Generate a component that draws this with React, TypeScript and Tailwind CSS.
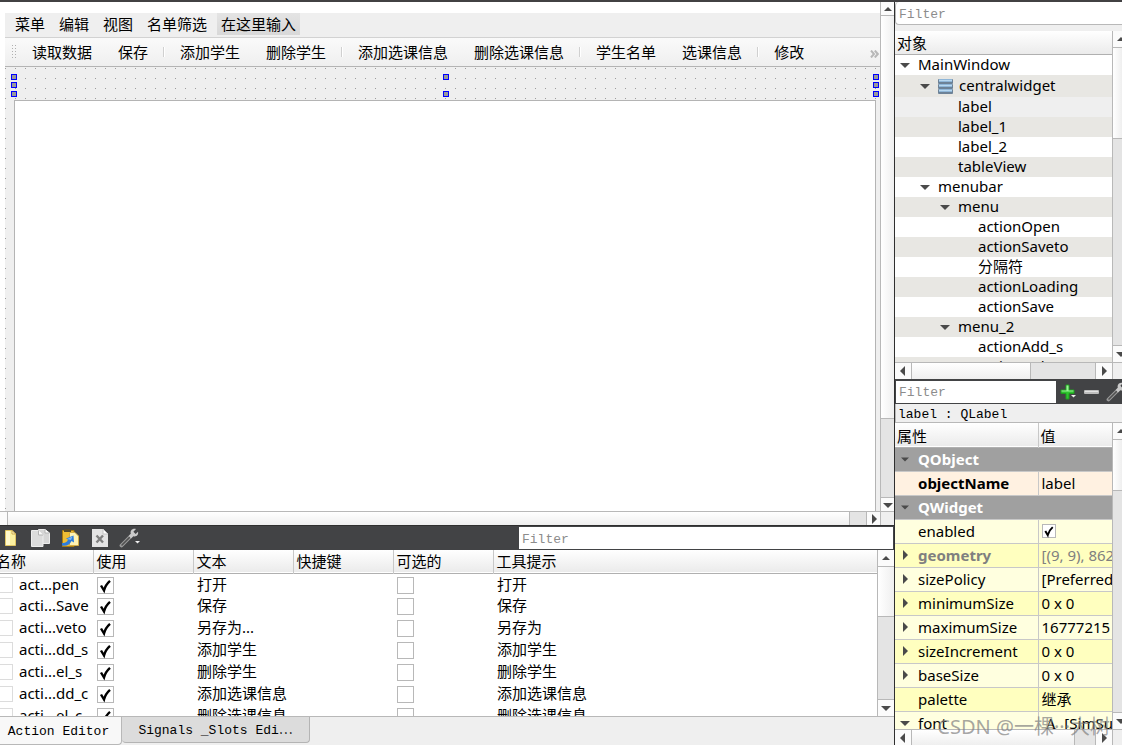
import type { ReactNode } from 'react';

const uiFont = "font-['Noto_Sans','Noto_Sans_CJK_SC',sans-serif]";
const monoFont = "font-['Liberation_Mono','Noto_Sans_CJK_SC',monospace]";

const menus = ['菜单', '编辑', '视图', '名单筛选'];

const toolGroups = [
  ['读取数据', '保存'],
  ['添加学生', '删除学生'],
  ['添加选课信息', '删除选课信息'],
  ['学生名单', '选课信息'],
  ['修改'],
];

const actions = [
  { name: 'act...pen', text: '打开', tip: '打开' },
  { name: 'acti...Save', text: '保存', tip: '保存' },
  { name: 'acti...veto', text: '另存为...', tip: '另存为' },
  { name: 'acti...dd_s', text: '添加学生', tip: '添加学生' },
  { name: 'acti...el_s', text: '删除学生', tip: '删除学生' },
  { name: 'acti...dd_c', text: '添加选课信息', tip: '添加选课信息' },
  { name: 'acti...el_c', text: '删除选课信息', tip: '删除选课信息' },
];

const indents = ['pl-1', 'pl-6', 'pl-11', 'pl-16'];

const objects = [
  { name: 'MainWindow', depth: 0, open: true },
  { name: 'centralwidget', depth: 1, open: true, layout: true },
  { name: 'label', depth: 2, selected: true },
  { name: 'label_1', depth: 2 },
  { name: 'label_2', depth: 2 },
  { name: 'tableView', depth: 2 },
  { name: 'menubar', depth: 1, open: true },
  { name: 'menu', depth: 2, open: true },
  { name: 'actionOpen', depth: 3 },
  { name: 'actionSaveto', depth: 3 },
  { name: '分隔符', depth: 3 },
  { name: 'actionLoading', depth: 3 },
  { name: 'actionSave', depth: 3 },
  { name: 'menu_2', depth: 2, open: true },
  { name: 'actionAdd_s', depth: 3 },
  { name: 'actionDel_s', depth: 3 },
];

const properties = [
  { name: 'enabled', check: true },
  { name: 'geometry', value: '[(9, 9), 862 x 25]', arrow: 'right', muted: true },
  { name: 'sizePolicy', value: '[Preferred, Preferred, 0, 0]', arrow: 'right' },
  { name: 'minimumSize', value: '0 x 0', arrow: 'right' },
  { name: 'maximumSize', value: '16777215 x 16777215', arrow: 'right' },
  { name: 'sizeIncrement', value: '0 x 0', arrow: 'right' },
  { name: 'baseSize', value: '0 x 0', arrow: 'right' },
  { name: 'palette', value: '继承' },
  { name: 'font', value: '[SimSun, 9]', arrow: 'down', font: true },
];

const arrowPaths = {
  up: 'M1 7 L5 3 L9 7 Z',
  down: 'M0 3 L10 3 L5 8 Z',
  left: 'M7 0 L7 10 L2 5 Z',
  right: 'M3 0 L3 10 L8 5 Z',
};

function Arrow({ dir, small }: { dir: keyof typeof arrowPaths; small?: boolean }) {
  return (
    <svg viewBox="0 0 10 10" className={`shrink-0 ${small ? 'h-2 w-2' : 'h-[10px] w-[10px]'}`} fill="#4a4a4a">
      <path d={arrowPaths[dir]} />
    </svg>
  );
}

function VScroll({ width, thumb, trough, button = 'h-[17px] w-4' }: { width: string; thumb: string; trough: string; button?: string }) {
  return (
    <div className={`flex shrink-0 flex-col overflow-hidden border-l border-[#b8b8b8] bg-[#e4e4e4] ${width}`}>
      <button aria-label="Scroll up" className={`flex shrink-0 items-center justify-center border-b border-[#b8b8b8] bg-[#fbfbfb] ${button}`}>
        <Arrow dir="up" />
      </button>
      <div className={`border-b border-[#b8b8b8] bg-gradient-to-r from-white to-[#efefef] ${thumb}`} />
      <div className={trough} />
      <button aria-label="Scroll down" className={`flex shrink-0 items-center justify-center border-t border-[#b8b8b8] bg-[#fbfbfb] ${button}`}>
        <Arrow dir="down" />
      </button>
    </div>
  );
}

interface HScrollProps {
  trough: string;
  corner: string;
  height: string;
  start?: string;
  end?: string;
}

function HScroll({ trough, corner, height, start = 'w-[17px] justify-center', end = 'w-[17px]' }: HScrollProps) {
  return (
    <div className={`flex shrink-0 overflow-hidden border-t border-[#b8b8b8] bg-[#e4e4e4] ${height}`}>
      <button aria-label="Scroll left" className={`flex shrink-0 items-center border-r border-[#b8b8b8] bg-[#fbfbfb] ${start}`}>
        <Arrow dir="left" />
      </button>
      <div className="flex-1 border-r border-[#b8b8b8] bg-gradient-to-b from-white to-[#efefef]" />
      <div className={`shrink-0 ${trough}`} />
      <button aria-label="Scroll right" className={`flex shrink-0 items-center justify-center border-l border-[#b8b8b8] bg-[#fbfbfb] ${end}`}>
        <Arrow dir="right" />
      </button>
      <div className={`shrink-0 border-l border-[#b8b8b8] bg-[#efefef] ${corner}`} />
    </div>
  );
}

function CheckBox({ label, checked, small }: { label: string; checked?: boolean; small?: boolean }) {
  return (
    <span className={`relative block ${small ? 'h-[14px] w-[14px]' : 'h-[17px] w-[17px]'}`}>
      <input
        type="checkbox"
        aria-label={label}
        defaultChecked={checked}
        className="peer block h-full w-full appearance-none border border-[#b8b8b8] bg-white"
      />
      <svg viewBox="0 0 17 17" className="pointer-events-none absolute inset-0 hidden h-full w-full peer-checked:block" fill="none" stroke="#000" strokeWidth="2.4">
        <path d="M4 8.5 L7 13.5 C8 9.5 10.5 6 13 3.8" />
      </svg>
    </span>
  );
}

function FilterInput({ label, className }: { label: string; className: string }) {
  return (
    <input
      aria-label={label}
      placeholder="Filter"
      className={`bg-white pl-[3px] pt-[2px] text-[13px] placeholder:text-[#8c8c8c] ${monoFont} ${className}`}
    />
  );
}

function Handle({ className }: { className: string }) {
  return <span className={`absolute h-[6px] w-[6px] border border-[#0000ff] bg-[#9a9a9a] ${className}`} />;
}

function IconButton({ label, className = '', children }: { label: string; className?: string; children: ReactNode }) {
  return (
    <button aria-label={label} className={`flex shrink-0 items-center justify-center ${className}`}>
      {children}
    </button>
  );
}

function Wrench() {
  return (
    <svg width="22" height="20" viewBox="0 0 22 20" className="shrink-0">
      <path d="M2.5 17.5 L12 8" stroke="#9a9a9a" strokeWidth="3.8" strokeLinecap="round" />
      <path d="M3 17 L12.5 7.5" stroke="#505050" strokeWidth="1.6" strokeLinecap="round" />
      <path d="M17 1 C13.5 0 10.8 2.6 11.8 5.8 L9.8 8 L12 10.4 L14.2 8.2 C17.2 9.2 19.8 7 19 3.8 L16.6 6 L14.4 3.8 Z" fill="#cacaca" />
      <path d="M16 13 H21 L18.5 15.5 Z" fill="#f0f0f0" />
    </svg>
  );
}

function ActionIcons() {
  return (
    <>
      <IconButton label="New" className="w-[30px]">
        <svg width="11" height="18" viewBox="0 0 11 18">
          <path d="M0.5 1.5 H7 L10.5 5 V16.5 H0.5 Z" fill="#fbf0a0" stroke="#e0c564" />
          <path d="M1 2 H5 V16 H1 Z" fill="#fff9cc" />
          <path d="M7 1.5 V5 H10.5 Z" fill="#fffbe0" stroke="#cdaa48" />
        </svg>
      </IconButton>
      <IconButton label="Copy" className="w-[30px]">
        <svg width="19" height="20" viewBox="0 0 19 20">
          <path d="M7.5 1.5 H14 L18.5 5 V15.5 H7.5 Z" fill="#d6d6d6" stroke="#ececec" />
          <path d="M14 1.5 V5 H18.5" fill="#fff" stroke="#b4b4b4" />
          <path d="M0.5 2.5 H7.5 L12 7 V18.5 H0.5 Z" fill="#dcdcdc" stroke="#eee" />
          <path d="M7.5 2.5 V7 H12" fill="#fafafa" stroke="#b4b4b4" />
        </svg>
      </IconButton>
      <IconButton label="Paste" className="w-[30px]">
        <svg width="18" height="20" viewBox="0 0 18 20">
          <path d="M1.5 2.5 H13 V18.5 H1.5 Z" fill="#efbd35" stroke="#a87a10" />
          <path d="M3 1 H10 V4 H3 Z" fill="#54492c" />
          <path d="M8.5 4.5 H14 L17.5 8 V17.5 H8.5 Z" fill="#fff3b4" stroke="#d4ad45" />
          <path d="M1 15 C4 15.5 6.5 14 7 11.5 L5 10.5 L12.5 7.5 L13 14.5 L10.5 13 C9 17 5 18.5 1 17.5 Z" fill="#2d7cdc" />
          <path d="M6 11 L11.5 8.5 L10 12 Z" fill="#7db8f4" />
        </svg>
      </IconButton>
      <IconButton label="Delete" className="w-[30px]">
        <svg width="16" height="18" viewBox="0 0 16 18">
          <path d="M0 0 H11 L16 5 V18 H0 Z" fill="#e4e4e4" />
          <path d="M11 0 V5 H16 Z" fill="#fff" stroke="#c4c4c4" />
          <path d="M4.5 6.5 L11 13.5 M11 6.5 L4.5 13.5" stroke="#808080" strokeWidth="2.4" />
        </svg>
      </IconButton>
      <IconButton label="Configure" className="w-[30px]">
        <Wrench />
      </IconButton>
    </>
  );
}

function LayoutIcon() {
  return (
    <svg width="15" height="15" viewBox="0 0 15 15" className="mr-[6px] shrink-0">
      {[0, 5, 10].map((y) => (
        <g key={y}>
          <rect x="0" y={y} width="15" height="5" rx="1" fill="#6d8297" />
          <rect x="1" y={y} width="13" height="3" fill="#8fb6d8" />
          <rect x="1" y={y + 1} width="13" height="1" fill="#b8d8f0" />
        </g>
      ))}
    </svg>
  );
}

function FormCanvas() {
  return (
    <section className="flex min-h-0 flex-1 flex-col">
      <div className="flex min-h-0 flex-1">
        <div className="flex min-w-0 flex-1 flex-col bg-white pl-[5px] pt-[11px]">
          <nav className="flex h-[25px] shrink-0 items-center border-b border-[#d2d2d2] bg-[#efefef] pb-[2px] pl-[3px] text-[15px]">
            {menus.map((menu) => (
              <button key={menu} className="shrink-0 px-[7px]">{menu}</button>
            ))}
            <button className="ml-[3px] h-[22px] shrink-0 bg-gradient-to-b from-[#e4e4e4] to-[#d8d8d8] px-1">在这里输入</button>
          </nav>
          <div className="flex h-[29px] shrink-0 items-center border-b border-[#b4b4b4] bg-gradient-to-b from-[#fafafa] to-[#efefef] pl-[6px] text-[15px]">
            <span className="mr-[3px] h-4 w-[5px] shrink-0 bg-[radial-gradient(circle,#b0b0b0_1px,transparent_1px)] bg-[length:3px_3px]" />
            {toolGroups.map((group, i) => (
              <div key={group[0]} className="flex shrink-0 items-center">
                {i > 0 && <span className="mx-[2px] h-[10px] w-[2px] border-l border-[#d0d0d0] bg-white" />}
                {group.map((tool) => (
                  <button key={tool} className="px-[13px]">{tool}</button>
                ))}
              </div>
            ))}
            <button aria-label="More tools" className="ml-auto pr-px pt-1">
              <svg width="9" height="8" viewBox="0 0 9 8" fill="none" stroke="#b8b8b8" strokeWidth="2">
                <path d="M1 0.5 L4 4 L1 7.5 M4.8 0.5 L7.8 4 L4.8 7.5" />
              </svg>
            </button>
          </div>
          <div className="relative flex min-h-0 flex-1 flex-col bg-[#efefef] bg-[linear-gradient(90deg,#efefef_9px,transparent_9px),linear-gradient(#efefef_9px,#9c9c9c_9px)] bg-[length:10px_10px] bg-[position:1px_2px] pl-[9px] pr-1">
            <div className="h-[33px] shrink-0" />
            <div className="flex-1 border-x border-t border-[#b4b4b4] bg-white" />
            <Handle className="left-[6px] top-[7px]" />
            <Handle className="left-[6px] top-[15px]" />
            <Handle className="left-[6px] top-[24px]" />
            <Handle className="left-1/2 top-[7px]" />
            <Handle className="left-1/2 top-[24px]" />
            <Handle className="right-[1px] top-[7px]" />
            <Handle className="right-[1px] top-[15px]" />
            <Handle className="right-[1px] top-[24px]" />
          </div>
        </div>
        <VScroll width="w-[14px]" thumb="flex-1" trough="h-[78px] shrink-0" button="h-[14px] w-full" />
      </div>
      <HScroll height="h-[14px]" start="w-2 justify-end pr-1" trough="w-4" end="w-[14px]" corner="w-[14px]" />
    </section>
  );
}

const actionHead = 'border-r border-[#c8c8c8] p-0 pl-[3px] font-normal';

function ActionEditor() {
  return (
    <section className="flex h-[220px] shrink-0 flex-col bg-[#efefef]">
      <div className="flex h-[25px] shrink-0 items-center border-t border-[#2f2f2f] bg-[#424345] pr-px">
        <div className="w-[519px] shrink-0">
          <div className="-ml-[5px] flex items-center">
            <ActionIcons />
          </div>
        </div>
        <FilterInput label="Filter actions" className="h-[22px] min-w-0 flex-1" />
      </div>
      <div className="flex min-h-0 flex-1">
        <div className="min-w-0 flex-1 overflow-hidden bg-white">
          <table className="w-full table-fixed text-[15px] leading-[22px]">
            <colgroup>
              <col className="w-[93px]" />
              <col className="w-[100px]" />
              <col className="w-[100px]" />
              <col className="w-[100px]" />
              <col className="w-[100px]" />
              <col />
            </colgroup>
            <thead>
              <tr className="h-[23px] border-b border-[#b0b0b0] bg-gradient-to-b from-white to-[#ebebeb] text-left">
                <th className="border-r border-[#c8c8c8] p-0 font-normal"><span className="-ml-1">名称</span></th>
                <th className={actionHead}>使用</th>
                <th className={actionHead}>文本</th>
                <th className={actionHead}>快捷键</th>
                <th className={actionHead}>可选的</th>
                <th className="p-0 pl-[3px] font-normal">工具提示</th>
              </tr>
            </thead>
            <tbody className="align-top leading-5">
              {actions.map((action) => (
                <tr key={action.name} className="h-[22px]">
                  <td className="p-0">
                    <div className="flex items-start gap-[6px] whitespace-nowrap">
                      <span className="mt-[3px] h-4 w-[13px] shrink-0 border-y border-r border-[#dcdcdc]" />
                      {action.name}
                    </div>
                  </td>
                  <td className="p-0 pl-1 pt-[3px]"><CheckBox label={`${action.name} 使用`} checked /></td>
                  <td className="p-0 pl-1 whitespace-nowrap">{action.text}</td>
                  <td className="p-0" />
                  <td className="p-0 pl-1 pt-[3px]"><CheckBox label={`${action.name} 可选的`} /></td>
                  <td className="p-0 pl-1 whitespace-nowrap">{action.tip}</td>
                </tr>
              ))}
            </tbody>
          </table>
        </div>
        <VScroll width="w-[17px]" thumb="h-[50px] shrink-0" trough="flex-1" />
      </div>
      <div className={`flex h-[29px] shrink-0 items-start border-t border-[#b8b8b8] text-[13px] ${monoFont}`}>
        <button className="h-[28px] w-[122px] shrink-0 rounded-br border-b border-r border-[#b8b8b8] bg-[#f8f8f8] pr-1 pt-[2px]">Action Editor</button>
        <button className="h-[26px] w-[188px] shrink-0 rounded-b border-b border-r border-[#b4b4b4] bg-[#dcdcdc] pt-px">
          Signals _Slots Edi<span className="font-['Noto_Sans_CJK_SC',sans-serif]">⋯</span>
        </button>
      </div>
    </section>
  );
}

function ObjectInspector() {
  return (
    <section className="flex min-h-0 flex-1 flex-col bg-[#efefef]">
      <FilterInput label="Filter objects" className="h-[23px] w-full shrink-0 rounded-l-sm border-b border-l border-[#b8b8b8]" />
      <div className="mt-[6px] flex min-h-0 flex-1">
        <div className="flex min-w-0 flex-1 flex-col bg-white">
          <div className="flex h-6 shrink-0 items-center border-b border-[#b0b0b0] bg-gradient-to-b from-white to-[#ebebeb] pl-[2px] pt-[2px] text-[15px]">对象</div>
          <ul className="min-h-0 flex-1 overflow-hidden text-[15px]">
            {objects.map((object, i) => (
              <li
                key={object.name}
                className={`flex items-center ${object.layout ? 'h-[22px]' : 'h-5'} ${indents[object.depth]} ${
                  object.selected ? 'bg-[#efefef]' : i % 2 ? 'bg-[#e8e7e3]' : 'bg-white'
                }`}
              >
                {object.open ? (
                  <button aria-label={`Collapse ${object.name}`} className="flex w-[19px] shrink-0 items-center pl-px">
                    <Arrow dir="down" />
                  </button>
                ) : (
                  <span className="w-[19px] shrink-0" />
                )}
                {object.layout && <LayoutIcon />}
                <span className="pb-[2px] leading-[18px]">{object.name}</span>
              </li>
            ))}
          </ul>
        </div>
        <VScroll width="w-[10px]" thumb="h-[91px] shrink-0" trough="flex-1" />
      </div>
      <HScroll height="h-[17px]" trough="w-16" corner="w-[10px]" />
    </section>
  );
}

function GroupRow({ name }: { name: string }) {
  return (
    <tr className="h-6 border-b border-[#c8c8c8] bg-[#a0a0a0]">
      <td colSpan={2} className="p-0">
        <div className="flex items-center pl-[6px] font-bold text-white">
          <span className="w-[17px] shrink-0"><Arrow dir="down" small /></span>
          {name}
        </div>
      </td>
    </tr>
  );
}

function PropertyEditor() {
  return (
    <section className="flex h-[366px] shrink-0 flex-col bg-[#efefef]">
      <div className="flex h-[25px] shrink-0 items-center bg-[#424345] pl-px">
        <FilterInput label="Filter properties" className="mr-1 h-[22px] min-w-0 flex-1" />
        <div className="flex w-[62px] shrink-0 items-center gap-[7px] overflow-hidden">
          <IconButton label="Add property">
            <svg width="17" height="16" viewBox="0 0 17 16">
              <path d="M6 1 H9 V6 H14 V9.5 H9 V15 H6 V9.5 H1 V6 H6 Z" fill="#2fc32f" stroke="#1f9e1f" />
              <path d="M6.5 1.5 H8.5 V6.5 H13.5 V7.5 H1.5 V6.5 H6.5 Z" fill="#9af296" />
              <path d="M11 11 H16 L13.5 13.5 Z" fill="#f0f0f0" />
            </svg>
          </IconButton>
          <IconButton label="Remove property">
            <svg width="15" height="4" viewBox="0 0 15 4">
              <rect width="15" height="4" rx="1" fill="#bdbdbd" />
              <rect x="1" y="1" width="13" height="1" fill="#e4e4e4" />
            </svg>
          </IconButton>
          <IconButton label="Configure properties">
            <Wrench />
          </IconButton>
        </div>
      </div>
      <div className={`flex h-[19px] shrink-0 items-center border-b border-l border-[#b8b8b8] pl-[2px] pt-[3px] text-[13px] ${monoFont}`}>label : QLabel</div>
      <div className="flex min-h-0 flex-1">
        <div className="min-w-0 flex-1 overflow-hidden bg-white">
          <table className="w-full table-fixed text-[15px] leading-5">
            <colgroup>
              <col className="w-[143px]" />
              <col />
            </colgroup>
            <thead>
              <tr className="h-6 border-b border-[#b0b0b0] bg-gradient-to-b from-white to-[#ebebeb] text-left">
                <th className="border-r border-[#c8c8c8] p-0 pl-[2px] pt-[2px] font-normal">属性</th>
                <th className="p-0 pl-[2px] pt-[2px] font-normal">值</th>
              </tr>
            </thead>
            <tbody>
              <GroupRow name="QObject" />
              <tr className="h-6 border-b border-[#c8c8c8] bg-[#fff1e1]">
                <td className="border-r border-[#c8c8c8] p-0 pl-[23px] font-bold">objectName</td>
                <td className="p-0 pl-[3px]">label</td>
              </tr>
              <GroupRow name="QWidget" />
              {properties.map((prop, i) => (
                <tr key={prop.name} className={`h-6 border-b border-[#c8c8c8] ${i % 2 ? 'bg-[#ffffbf]' : 'bg-[#ffffdf]'}`}>
                  <td className="border-r border-[#c8c8c8] p-0">
                    <div className={`flex items-center pl-[5px] ${prop.muted ? 'font-bold text-[#808080]' : ''}`}>
                      <span className="flex w-[18px] shrink-0 items-center">
                        {prop.arrow && <Arrow dir={prop.arrow as 'right' | 'down'} />}
                      </span>
                      {prop.name}
                    </div>
                  </td>
                  <td className={`overflow-hidden p-0 pl-[3px] whitespace-nowrap ${prop.muted ? 'text-[#808080]' : ''}`}>
                    {prop.check && <CheckBox label={prop.name} checked small />}
                    {prop.font && <span className="mr-2 pl-1 font-['Liberation_Serif',serif]">A</span>}
                    {prop.value}
                  </td>
                </tr>
              ))}
            </tbody>
          </table>
        </div>
        <VScroll width="w-[10px]" thumb="h-[51px] shrink-0" trough="flex-1" />
      </div>
      <HScroll height="h-4" trough="w-5" corner="w-[10px]" />
    </section>
  );
}

export default function App() {
  return (
    <main className={`relative flex h-screen overflow-hidden border-t-2 border-[#424143] bg-[#efefef] text-black ${uiFont}`}>
      <div className="flex min-w-0 flex-1 flex-col">
        <FormCanvas />
        <ActionEditor />
      </div>
      <aside className="flex w-[228px] shrink-0 flex-col border-l border-[#2f2f2f]">
        <ObjectInspector />
        <PropertyEditor />
      </aside>
      <span className="pointer-events-none absolute bottom-1 right-3 text-[20px] leading-7 text-[#808080]/70">CSDN @一棵···大树</span>
    </main>
  );
}
